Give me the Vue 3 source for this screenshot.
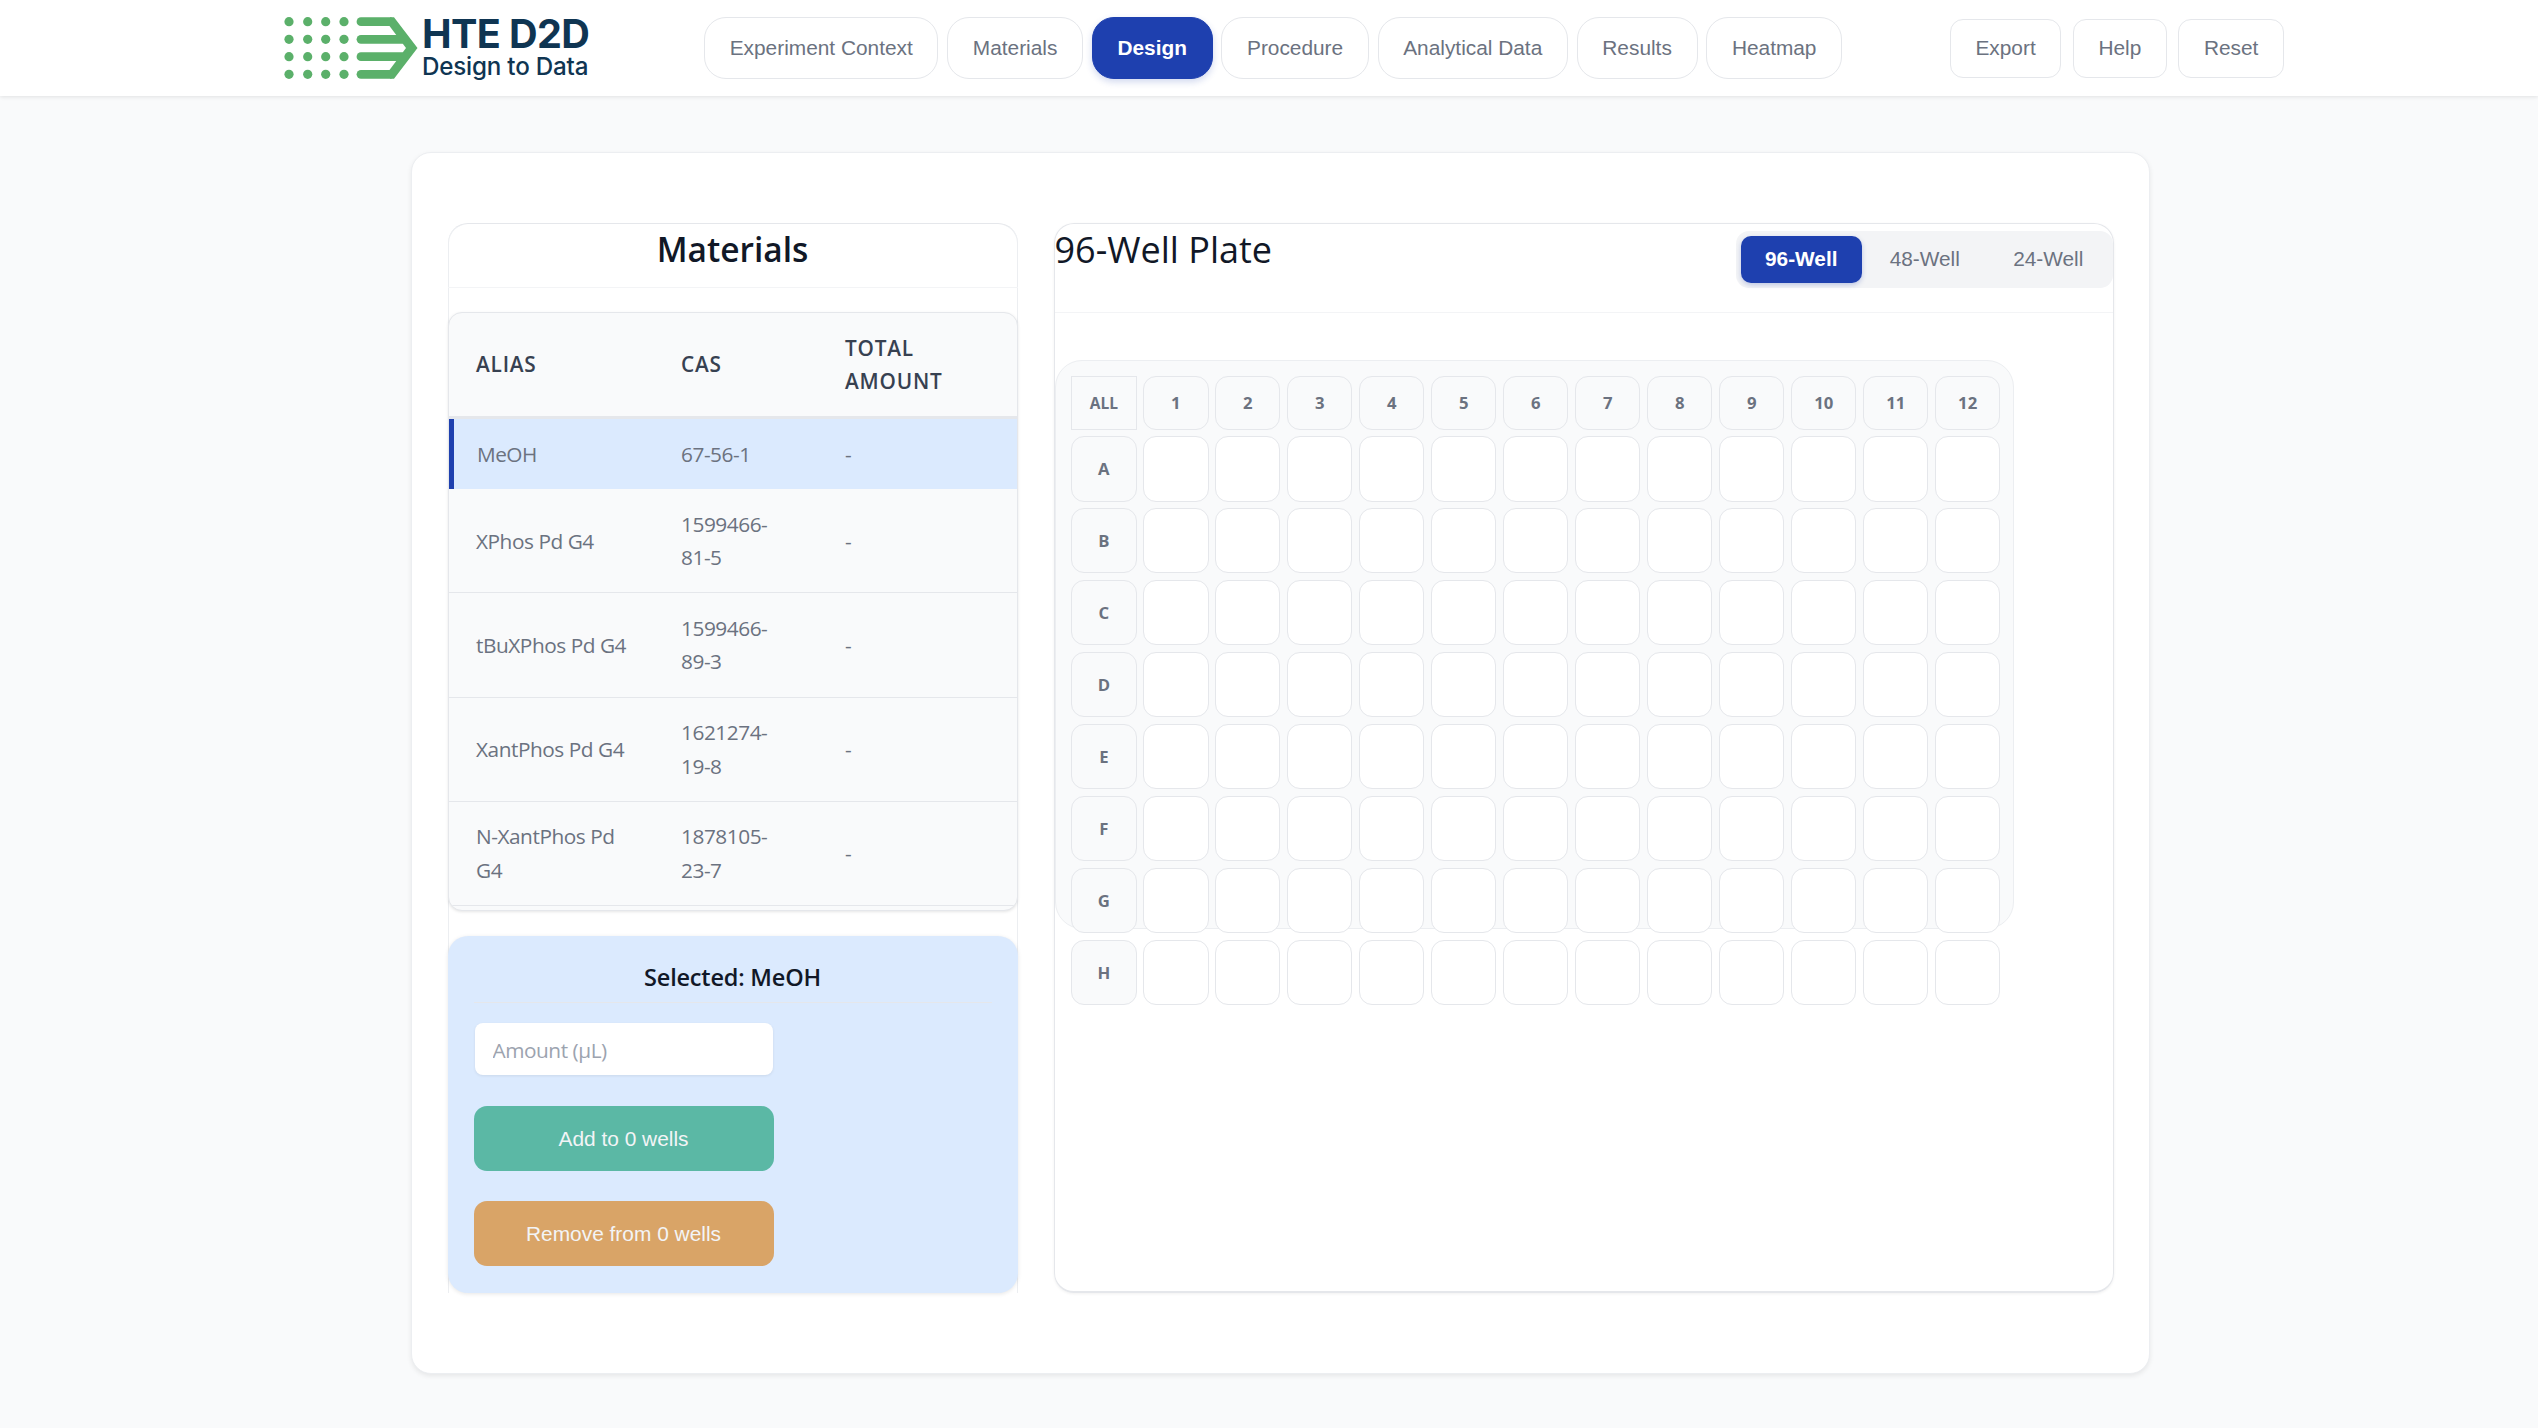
<template>
  <div class="app">
    <header class="topbar">
      <div class="brand">
        <svg class="mark" width="134" height="66" viewBox="0 0 134 66">
          <g fill="#5bb06a">
            <template v-for="y in dotRows" :key="y">
              <circle v-for="x in dotCols" :key="x" :cx="x" :cy="y" r="4.6" />
            </template>
          </g>
          <g fill="none" stroke="#5bb06a" stroke-width="8.8" stroke-linecap="round">
            <path d="M77 6.7H106" />
            <path d="M77 24.3H118" />
            <path d="M77 41.7H118" />
            <path d="M77 59.3H106" />
          </g>
          <path d="M106 2.3H110L133.5 33 110 63.7H106V54.9H105.5L122 33 105.5 11.1H106Z" fill="#5bb06a" />
        </svg>
        <div class="brand-text">
          <div class="brand-name">HTE D2D</div>
          <div class="brand-sub">Design to Data</div>
        </div>
      </div>
      <nav class="tabs">
        <button v-for="t in tabs" :key="t" class="tab" :class="{ active: t === 'Design' }">{{ t }}</button>
      </nav>
      <div class="actions">
        <button v-for="a in actions" :key="a" class="action">{{ a }}</button>
      </div>
    </header>

    <main class="page">
      <div class="card">
        <section class="materials">
          <div class="panel-head">
            <h2>Materials</h2>
          </div>
          <div class="table-box">
            <table>
              <colgroup>
                <col style="width: 205px" />
                <col style="width: 164px" />
                <col />
              </colgroup>
              <thead>
                <tr>
                  <th>Alias</th>
                  <th>CAS</th>
                  <th>Total Amount</th>
                </tr>
              </thead>
              <tbody>
                <tr v-for="m in materials" :key="m.alias" :class="{ selected: m.alias === selected }">
                  <td>{{ m.alias }}</td>
                  <td class="cas">{{ m.cas }}</td>
                  <td>-</td>
                </tr>
              </tbody>
            </table>
          </div>
          <div class="selected-box">
            <h3>Selected: {{ selected }}</h3>
            <input class="amount" type="text" placeholder="Amount (µL)" />
            <button class="btn add">Add to 0 wells</button>
            <button class="btn remove">Remove from 0 wells</button>
          </div>
        </section>

        <section class="plate-panel">
          <div class="plate-head">
            <h2>96-Well Plate</h2>
            <div class="plate-toggle">
              <button v-for="p in plates" :key="p" :class="{ on: p === '96-Well' }">{{ p }}</button>
            </div>
          </div>
          <div class="plate">
            <div class="grid">
              <div class="cell head all">ALL</div>
              <div v-for="c in 12" :key="c" class="cell head">{{ c }}</div>
              <template v-for="r in rows" :key="r">
                <div class="cell head">{{ r }}</div>
                <div v-for="c in 12" :key="c" class="cell well"></div>
              </template>
            </div>
          </div>
        </section>
      </div>
    </main>
  </div>
</template>

<script setup>
const tabs = ['Experiment Context', 'Materials', 'Design', 'Procedure', 'Analytical Data', 'Results', 'Heatmap']
const actions = ['Export', 'Help', 'Reset']
const plates = ['96-Well', '48-Well', '24-Well']
const rows = ['A', 'B', 'C', 'D', 'E', 'F', 'G', 'H']
const dotCols = [5, 23.7, 41.7, 60]
const dotRows = [6.7, 24.3, 41.7, 59.3]
const selected = 'MeOH'

const materials = [
  { alias: 'MeOH', cas: '67-56-1' },
  { alias: 'XPhos Pd G4', cas: '1599466-81-5' },
  { alias: 'tBuXPhos Pd G4', cas: '1599466-89-3' },
  { alias: 'XantPhos Pd G4', cas: '1621274-19-8' },
  { alias: 'N-XantPhos Pd G4', cas: '1878105-23-7' }
]
</script>

<style>
html,
body {
  margin: 0;
  background: #f9fafb;
}
</style>

<style scoped>
.app {
  min-height: 1428px;
  background: #f9fafb;
  font-family: "Open Sans", "Noto Sans", sans-serif;
  box-sizing: border-box;
}

.topbar {
  height: 96px;
  background: #fff;
  box-shadow: 0 1px 4px rgba(0, 0, 0, 0.1);
  display: flex;
  align-items: center;
  padding: 0 254px 0 284px;
  box-sizing: content-box;
}

.brand {
  display: flex;
  align-items: center;
  width: 420px;
  flex: none;
  gap: 4px;
}

.mark {
  flex: none;
}

.brand-text {
  color: #0f3552;
  font-family: Inter, Roboto, sans-serif;
  margin-bottom: 3px;
}

.brand-name {
  font-size: 39.6px;
  font-weight: 700;
  line-height: 40px;
  letter-spacing: -0.6px;
}

.brand-sub {
  font-size: 24.2px;
  font-weight: 500;
  line-height: 26px;
  letter-spacing: -0.2px;
}

.tabs {
  display: flex;
  gap: 8.7px;
}

.tab,
.action {
  font-family: "Liberation Sans", Arial, sans-serif;
  font-size: 20.85px;
  color: #6b7280;
  background: #fff;
  border: 1.67px solid #e5e7eb;
  cursor: pointer;
}

.tab {
  height: 62px;
  padding: 0 24.7px;
  border-radius: 22px;
}

.tab.active {
  background: #1e40af;
  border-color: #1e40af;
  color: #fff;
  font-weight: 700;
  box-shadow: 0 3px 7px rgba(30, 64, 175, 0.2);
}

.actions {
  display: flex;
  gap: 11.5px;
  margin-left: auto;
}

.action {
  height: 59px;
  padding: 0 24.6px;
  border-radius: 13px;
}

.page {
  padding: 56px 388px 54px 411px;
}

.card {
  background: #fff;
  border-radius: 20px;
  border: 1.67px solid #eceef1;
  box-shadow: 0 2px 5px rgba(0, 0, 0, 0.08);
  padding: 70px 35.5px 80px;
  display: flex;
  gap: 36px;
  height: 1222px;
  box-sizing: border-box;
}

.materials {
  width: 570px;
  flex: none;
  display: flex;
  flex-direction: column;
  border-top: 1.67px solid #e5e7eb;
  border-radius: 20px 20px 0 0;
  box-shadow: inset 1px 0 0 #eceef1, inset -1px 0 0 #eceef1;
}

.panel-head {
  height: 63px;
  border-bottom: 1.67px solid #f3f4f6;
  text-align: center;
  flex: none;
}

h2 {
  margin: 0;
  font-size: 36px;
  font-weight: 500;
  line-height: 51px;
  color: #111827;
}

.panel-head h2 {
  font-size: 33.5px;
  font-weight: 600;
}

.table-box {
  margin-top: 24px;
  height: 599px;
  box-sizing: border-box;
  background: #f9fafb;
  border: 1.67px solid #e5e7eb;
  border-radius: 14px;
  box-shadow: 0 1px 3px rgba(0, 0, 0, 0.1);
  overflow: hidden;
  flex: none;
}

table {
  width: 100%;
  table-layout: fixed;
  border-collapse: separate;
  border-spacing: 0;
}

th {
  padding: 18.5px 20px 17.5px 27.5px;
  text-align: left;
  font-size: 20.8px;
  font-weight: 550;
  line-height: 33.3px;
  letter-spacing: 0.8px;
  text-transform: uppercase;
  color: #374151;
  border-bottom: 3.33px solid #e5e7eb;
}

td {
  padding: 18.6px 20px 18px 27.5px;
  font-size: 20.8px;
  line-height: 33.3px;
  letter-spacing: -0.45px;
  color: #6b7280;
  border-bottom: 1.67px solid #e5e7eb;
}

td.cas {
  padding-right: 30px;
}

tr.selected td {
  background: #dbeafe;
  border-bottom: 0;
  padding-top: 19.2px;
  padding-bottom: 18.2px;
}

tr.selected td:first-child {
  border-left: 5px solid #1e40af;
  padding-left: 23.4px;
}

.selected-box {
  margin-top: 25px;
  flex: 1;
  background: #dbeafe;
  border-radius: 20px;
  box-shadow: 0 1px 4px rgba(0, 0, 0, 0.1);
  padding: 20px 26px 26px;
  display: flex;
  flex-direction: column;
  align-items: flex-start;
}

h3 {
  margin: 0 0 20px;
  width: 100%;
  height: 47px;
  box-sizing: border-box;
  border-bottom: 1.67px solid #e5e7eb;
  text-align: center;
  font-size: 23.5px;
  font-weight: 550;
  line-height: 43px;
  letter-spacing: -0.2px;
  color: #111827;
}

.amount {
  width: 298px;
  height: 52px;
  box-sizing: border-box;
  margin-left: 1px;
  padding: 2px 18px 0;
  border: 0;
  border-radius: 8px;
  background: #fff;
  font-family: inherit;
  font-size: 20.8px;
  letter-spacing: -0.45px;
  box-shadow: 0 1px 3px rgba(0, 0, 0, 0.08);
}

.amount::placeholder {
  color: #9ca3af;
}

.btn {
  width: 300px;
  height: 65px;
  border: 0;
  border-radius: 13px;
  color: #f3f4f6;
  font-family: "Liberation Sans", Arial, sans-serif;
  font-size: 20.9px;
  cursor: pointer;
}

.add {
  margin-top: 31px;
  background: #5bb8a5;
}

.remove {
  margin-top: 30px;
  background: #d9a467;
}

.plate-panel {
  width: 1060px;
  flex: none;
  border: 1.67px solid #e5e7eb;
  border-bottom-width: 2px;
  border-radius: 20px;
  box-sizing: border-box;
  box-shadow: 0 1px 3px rgba(0, 0, 0, 0.06);
}

.plate-head {
  height: 87.5px;
  display: flex;
  justify-content: space-between;
  align-items: flex-start;
  border-bottom: 1.67px solid #f3f4f6;
}

.plate-toggle {
  margin-top: 6.5px;
  height: 57px;
  box-sizing: border-box;
  padding: 5px 4px 5px 5px;
  display: flex;
  gap: 3px;
  background: #f3f4f6;
  border-radius: 13px;
}

.plate-toggle button {
  width: 120.5px;
  height: 47px;
  border: 0;
  border-radius: 10px;
  background: transparent;
  font-family: "Liberation Sans", Arial, sans-serif;
  font-size: 20.8px;
  color: #6b7280;
  cursor: pointer;
}

.plate-toggle button.on {
  background: #1e40af;
  color: #fff;
  font-weight: 700;
  box-shadow: 0 2px 5px rgba(30, 64, 175, 0.25);
}

.plate {
  margin-top: 47.5px;
  margin-left: 0.5px;
  width: 959px;
  height: 569px;
  box-sizing: border-box;
  padding: 15.2px 14.7px 14.7px 15.2px;
  background: #f9fafb;
  border: 1.67px solid #eceef1;
  border-radius: 27px;
}

.grid {
  display: grid;
  grid-template-columns: repeat(13, 65.33px);
  grid-template-rows: 53.33px repeat(8, 65.33px);
  gap: 6.67px;
}

.cell {
  box-sizing: border-box;
  border: 1.67px solid #e5e7eb;
  border-radius: 13px;
  display: flex;
  align-items: center;
  justify-content: center;
}

.head {
  background: #f9fafb;
  font-size: 16.7px;
  font-weight: 700;
  color: #6b7280;
}

.all {
  border-radius: 0;
  font-size: 15.5px;
}

.well {
  background: #fff;
}
</style>
